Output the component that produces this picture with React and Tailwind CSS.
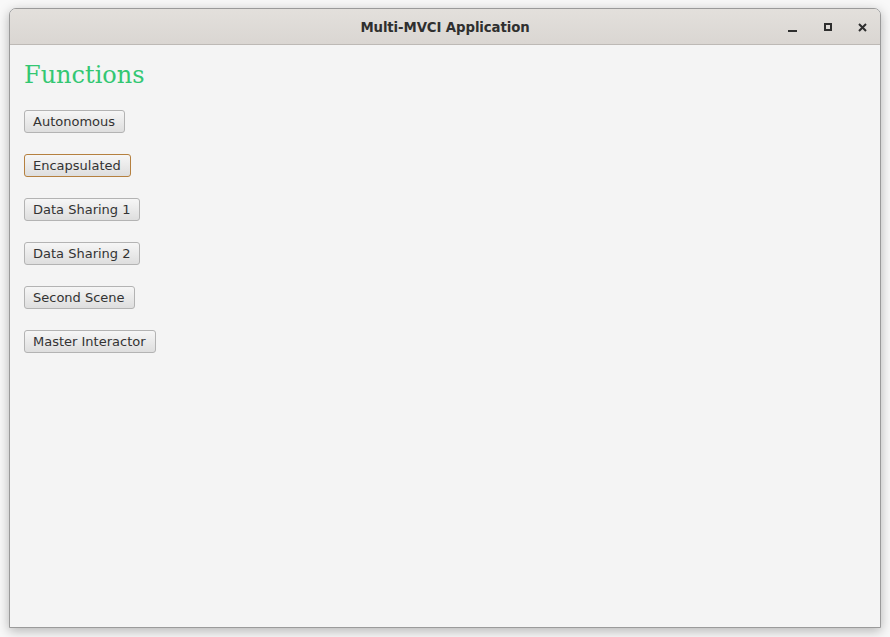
const buttons = [
  { label: 'Autonomous' },
  { label: 'Encapsulated', focused: true },
  { label: 'Data Sharing 1' },
  { label: 'Data Sharing 2' },
  { label: 'Second Scene' },
  { label: 'Master Interactor' },
]

function App() {
  return (
    <div className="w-[890px] h-[637px] bg-[#f8f8f8] pt-[8px] pl-[9px] overflow-hidden">
      {/* Window */}
      <div className="w-[872px] h-[620px] flex flex-col border border-[#9a9a9a] rounded-t-[7px] shadow-[0_3px_12px_rgba(0,0,0,0.28)] bg-[#f4f4f4] overflow-hidden">
        {/* Title bar */}
        <div className="relative h-[36px] shrink-0 flex items-center justify-center bg-gradient-to-b from-[#e3e0dc] to-[#dad6d2] border-b border-[#bdb9b5]">
          <span className="pt-[2px] text-[13.3px] font-bold text-[#2f2f2f] font-['DejaVu_Sans',sans-serif] tracking-[-0.1px]">
            Multi-MVCI Application
          </span>
          <div className="absolute right-0 top-0 h-full flex items-center">
            <div className="w-[35px] flex justify-center pt-[9px]">
              <div className="w-[9px] h-[2px] bg-[#2e2e2e]" />
            </div>
            <div className="w-[35px] flex justify-center pt-[1px]">
              <div className="w-[8px] h-[8px] border-2 border-[#2e2e2e]" />
            </div>
            <div className="w-[35px] flex justify-center pt-[1px]">
              <svg width="9" height="9" viewBox="0 0 9 9">
                <path d="M1 1 L8 8 M8 1 L1 8" stroke="#2e2e2e" strokeWidth="2" />
              </svg>
            </div>
          </div>
        </div>

        {/* Content */}
        <div className="flex-1 px-[14px] pt-[15px]">
          <h1 className="text-[24px] leading-[30px] text-[#33c772] font-['DejaVu_Serif',serif]">
            Functions
          </h1>
          <div className="mt-[20px] flex flex-col items-start gap-[21px]">
            {buttons.map((b) => (
              <button
                key={b.label}
                className={`h-[23px] pl-[8px] pr-[9px] rounded-[3px] border bg-gradient-to-b from-[#f6f6f6] to-[#dedede] text-[13px] leading-none text-[#333333] font-['DejaVu_Sans',sans-serif] ${
                  b.focused ? 'border-[#b5803f]' : 'border-[#b3b3b3]'
                }`}
              >
                {b.label}
              </button>
            ))}
          </div>
        </div>
      </div>
    </div>
  )
}

export default App
